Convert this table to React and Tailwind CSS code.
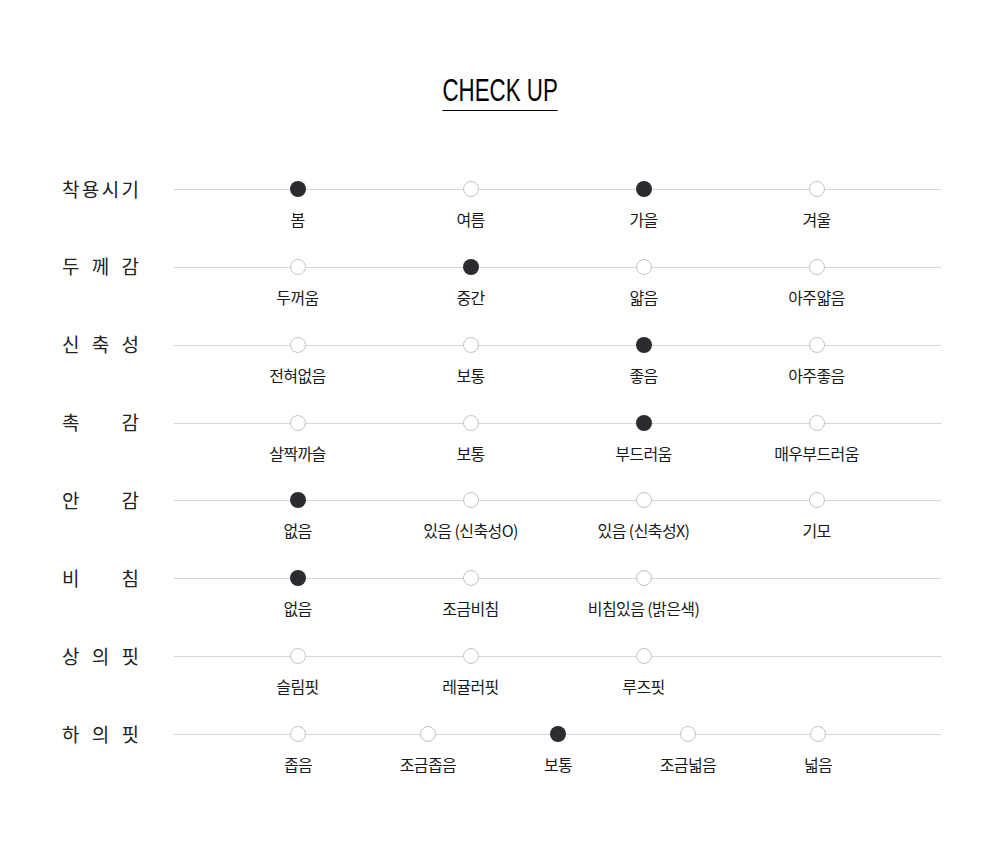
import React from "react";

const rows = [
  { label: "착용시기", opts: ["봄", "여름", "가을", "겨울"], sel: [0, 2] },
  { label: "두께감", opts: ["두꺼움", "중간", "얇음", "아주얇음"], sel: [1] },
  { label: "신축성", opts: ["전혀없음", "보통", "좋음", "아주좋음"], sel: [2] },
  { label: "촉감", opts: ["살짝까슬", "보통", "부드러움", "매우부드러움"], sel: [2] },
  { label: "안감", opts: ["없음", "있음 (신축성O)", "있음 (신축성X)", "기모"], sel: [0] },
  { label: "비침", opts: ["없음", "조금비침", "비침있음 (밝은색)"], sel: [0] },
  { label: "상의핏", opts: ["슬림핏", "레귤러핏", "루즈핏"], sel: [] },
  { label: "하의핏", opts: ["좁음", "조금좁음", "보통", "조금넓음", "넓음"], sel: [2] },
];

const KR = { fontFamily: '"Noto Sans CJK KR", "Noto Sans", sans-serif' };

function Row({ label, opts, sel }) {
  const five = opts.length === 5;
  return (
    <div className="flex items-start h-[77.86px]">
      <div className="ml-[62px] w-[77px] h-4 flex items-center justify-between text-[19px] leading-none text-[#222] -translate-y-px">
        {label.split("").map((c, i) => (
          <span key={i}>{c}</span>
        ))}
      </div>
      <div className="relative ml-[35px] w-[767px]">
        <div className="absolute left-0 right-0 top-[8px] h-px bg-[#d6d6d6]" />
        <div className={"relative flex " + (five ? "pl-[59px]" : "pl-[37px]")}>
          {opts.map((o, i) => (
            <div
              key={i}
              className={"flex flex-col items-center " + (five ? "w-[130px]" : "w-[173px]")}
            >
              {sel.includes(i) ? (
                <div className="w-4 h-4 rounded-full bg-[#2b2b30]" />
              ) : (
                <div className="w-4 h-4 rounded-full bg-white border border-[#c4c4c4]" />
              )}
              <div className="mt-[12px] h-5 text-[16px] leading-5 text-[#1a1a1a] whitespace-nowrap tracking-[-0.6px]">
                {o}
              </div>
            </div>
          ))}
        </div>
      </div>
    </div>
  );
}

export default function App() {
  return (
    <div className="w-[1000px] h-[852px] bg-white" style={KR}>
      <div className="pt-[74px] h-[181px] flex justify-center items-start">
        <div className="scale-x-[0.72] origin-center">
          <div
            className="text-[31px] leading-[34px] text-black border-b border-black pb-[2px]"
            style={{ fontFamily: '"Liberation Sans", Arial, sans-serif' }}
          >
            CHECK UP
          </div>
        </div>
      </div>
      <div>
        {rows.map((r, i) => (
          <Row key={i} {...r} />
        ))}
      </div>
    </div>
  );
}
